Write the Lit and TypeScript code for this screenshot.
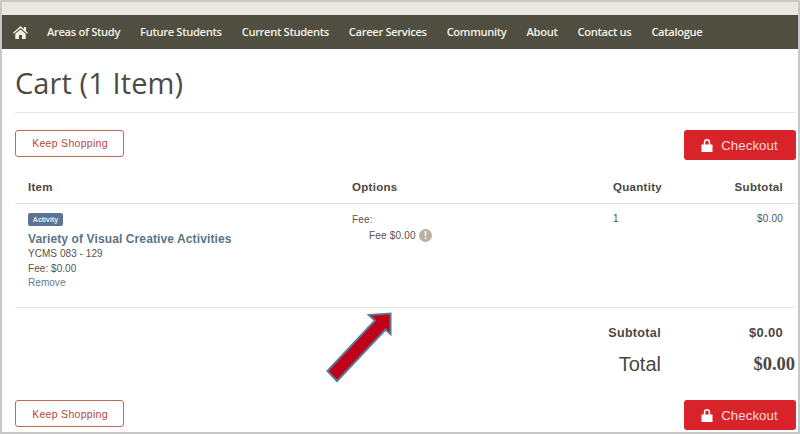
import { LitElement, html, css } from "lit";
import { customElement } from "lit/decorators.js";

const lock = html`<svg class="lock" viewBox="0 0 12 13" width="12" height="13"><path d="M2.800 5.500V3.300a3.200 3.200 0 0 1 6.400 0V5.500h2c.2 0 .3.100.3.300v6.900c0 .2-.1.300-.3.300H.8c-.2 0-.3-.1-.3-.3V5.800c0-.2.1-.3.300-.3zm1.500 0h3.400V3.300a1.700 1.700 0 0 0-3.400 0z" fill="#fff" fill-rule="evenodd"/></svg>`;

@customElement("app-root")
export class AppRoot extends LitElement {
  static styles = css`
    :host { display: block; width: 800px; height: 434px; font-family: "Liberation Sans", Arial, sans-serif; color: #4a473f; }
    * { box-sizing: border-box; }
    .frame { position: relative; width: 800px; height: 434px; border: 2px solid #c8c8c8; background: #fff; overflow: hidden; display: flex; flex-direction: column; }
    .strip { height: 13px; flex: none; background: #e9e9e2; }
    nav { height: 34px; flex: none; background: #4f4e40; display: flex; align-items: center; padding: 0 0 2px 11px; color: #f4f2e6; font-family: "Open Sans", sans-serif; font-weight: 600; font-size: 11.200px; letter-spacing: -0.350px; }
    nav svg { display: block; margin: 2px 19px 0 0; }
    nav span { margin-right: 20px; white-space: nowrap; }
    nav span.tight { margin-right: 19.500px; }
    main { flex: 1; padding: 0 2px 0 13px; display: flex; flex-direction: column; }
    h1 { margin: 0; height: 64px; flex: none; border-bottom: 1px solid #ebe6da; font: 400 29px/67px "Open Sans", sans-serif; letter-spacing: 0.100px; color: #4c4a42; }
    .actions { display: flex; justify-content: space-between; align-items: flex-start; flex: none; height: 30px; }
    .top { margin-top: 17px; }
    .keep { width: 109px; height: 27px; border: 1px solid #bd6a58; border-radius: 3px; display: flex; align-items: center; justify-content: center; font-size: 10.500px; letter-spacing: 0.300px; color: #b5483a; background: #fff; padding: 0 0 1px 1px; }
    .checkout { width: 112px; height: 30px; background: #d8232a; border-radius: 3px; color: #f8dcd8; font-size: 13.200px; letter-spacing: 0.100px; display: flex; align-items: center; justify-content: center; gap: 8px; padding-right: 1px; }
    .grid { display: grid; grid-template-columns: 337px 261px 1fr 122px; }
    .head { flex: none; height: 44px; border-bottom: 1px solid #e6e1d4; align-items: center; font-weight: 700; font-size: 11.500px; letter-spacing: 0.300px; padding-top: 10px; }
    .head div:first-child, .row > div:first-child { padding-left: 13px; }
    .r { text-align: right; padding-right: 13px; }
    .row { flex: none; height: 104px; border-bottom: 1px solid #ebe6da; font-size: 10px; letter-spacing: 0.200px; padding-top: 8px; color: #55534b; }
    .badge { display: block; width: 35px; height: 13px; margin-top: 1px; line-height: 13px; text-align: center; background: #5d7396; color: #e8edf2; border-radius: 2px; font-size: 7px; font-weight: 700; letter-spacing: 0; }
    .name { font-size: 12px; font-weight: 700; color: #587588; line-height: 16px; margin-top: 5px; letter-spacing: 0.110px; }
    .line { line-height: 14.500px; letter-spacing: 0.050px; }
    .rem { color: #5f7d8a; }
    .fee { line-height: 15px; }
    .fee2 { display: flex; align-items: center; gap: 3px; padding-left: 17px; height: 17px; }
    .info { width: 13px; height: 13px; border-radius: 50%; background: #b9b09f; color: #fff; font: 700 10px/13px "Liberation Sans", sans-serif; text-align: center; letter-spacing: 0; }
    .qty { margin-top: -1px; line-height: 15px; }
    .sum { flex: none; display: grid; grid-template-columns: 646px 122px; font-weight: 700; font-size: 12.500px; letter-spacing: 0.350px; align-items: center; height: 25px; margin-top: 12px; color: #4a473f; }
    .sum div { text-align: right; }
    .sum .v { font-size: 13px; letter-spacing: 0.300px; }
    .tot { flex: none; display: grid; grid-template-columns: 646px 134px; align-items: center; height: 34px; margin-top: 2px; }
    .tot div { text-align: right; }
    .tot .l { font-size: 20px; font-weight: 400; }
    .tot .v { font: 700 18.500px "Liberation Serif", serif; }
    .bottom { margin-top: 19px; height: 31px; }
    .bottom .keep { padding-bottom: 0; }
    .arrow { position: absolute; left: 0; top: 0; pointer-events: none; }
  `;

  render() {
    const nav = ["Areas of Study", "Future Students", "Current Students", "Career Services", "Community", "About", "Contact us", "Catalogue"];
    return html`<div class="frame">
      <div class="strip"></div>
      <nav>
        <svg width="15" height="13" viewBox="0 0 15 13"><path d="M7.500 0 11 3V1h2v4l2 1.800-.8.900L7.500 2 .8 7.700 0 6.800zM2.300 7.800 7.500 3.400l5.200 4.400V13H9V9H6v4H2.300z" fill="#f4f2e6"/></svg>
        ${nav.map((n) => html`<span>${n}</span>`)}
      </nav>
      <main>
        <h1>Cart (1 Item)</h1>
        <div class="actions top">
          <div class="keep">Keep Shopping</div>
          <div class="checkout">${lock}<span>Checkout</span></div>
        </div>
        <div class="grid head">
          <div>Item</div><div>Options</div><div>Quantity</div><div class="r">Subtotal</div>
        </div>
        <div class="grid row">
          <div>
            <span class="badge">Activity</span>
            <div class="name">Variety of Visual Creative Activities</div>
            <div class="line">YCMS 083 - 129</div>
            <div class="line">Fee: $0.00</div>
            <div class="line rem">Remove</div>
          </div>
          <div>
            <div class="fee">Fee:</div>
            <div class="fee2"><span>Fee $0.00</span><span class="info">!</span></div>
          </div>
          <div class="qty">1</div>
          <div class="r qty">$0.00</div>
        </div>
        <div class="sum"><div>Subtotal</div><div class="v">$0.00</div></div>
        <div class="tot"><div class="l">Total</div><div class="v">$0.00</div></div>
        <div class="actions bottom">
          <div class="keep">Keep Shopping</div>
          <div class="checkout">${lock}<span>Checkout</span></div>
        </div>
      </main>
      <svg class="arrow" width="796" height="430" viewBox="2 2 796 430">
        <path d="M327.500 371 375 320.500 369 315 390.500 313.500 390.500 334 385.500 329.500 337 381Z" fill="#c00018" stroke="#5a7691" stroke-width="2"/>
      </svg>
    </div>`;
  }
}
